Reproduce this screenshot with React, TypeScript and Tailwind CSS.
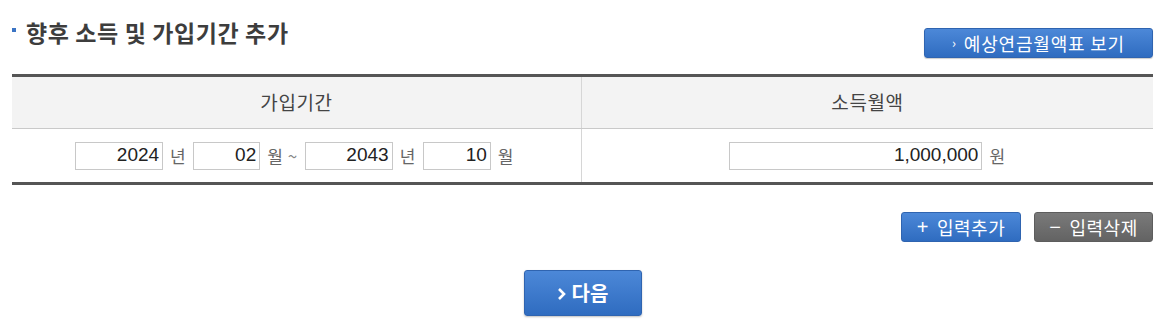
import React from 'react';

const KR = "font-['Noto_Sans_CJK_KR','Noto_Sans',sans-serif]";
const NUM = "font-['Liberation_Sans',Arial,sans-serif]";

const Field: React.FC<{ value: string; width: string }> = ({ value, width }) => (
  <input
    readOnly
    value={value}
    className={`${width} h-[28px] border border-[#c8c8c8] bg-white pr-[3px] text-right text-[19px] text-[#222] outline-none ${NUM}`}
  />
);

const Unit: React.FC<{ children: React.ReactNode }> = ({ children }) => (
  <span className={`text-[17px] tracking-[0.5px] text-[#666] ${KR}`}>{children}</span>
);

export default function App() {
  return (
    <div className={`w-[1170px] h-[330px] bg-white pl-[12px] pt-[16px] ${KR}`}>
      <div className="w-[1141px]">
        {/* title row */}
        <div className="flex items-start justify-between">
          <h2 className="flex items-center gap-[10px] text-[23px] tracking-[0.6px] font-bold text-[#3d3d3d] leading-[32px]">
            <span className="mt-[-4px] h-[4px] w-[4px] bg-[#3b74c4]" />
            향후 소득 및 가입기간 추가
          </h2>
          <button className="mt-[12px] flex h-[30px] w-[229px] items-center justify-center gap-[7px] rounded-[3px] border border-[#2f64b0] bg-gradient-to-b from-[#4c88d8] to-[#2f6cc0] text-[18px] tracking-[0.8px] text-white shadow-[0_1px_1px_rgba(0,0,0,0.2)]">
            <span className="text-[13px]">›</span>예상연금월액표 보기
          </button>
        </div>

        {/* table */}
        <div className="mt-[16px] border-t-[3px] border-b-[3px] border-[#555]">
          <div className="grid grid-cols-[570px_1fr] bg-[#f3f3f3] border-b border-[#c9c9c9] h-[52px] text-[19px] tracking-[0.6px] text-[#444]">
            <div className="flex items-center justify-center border-r border-[#d6d6d6]">가입기간</div>
            <div className="flex items-center justify-center">소득월액</div>
          </div>
          <div className="grid grid-cols-[570px_1fr] h-[53px]">
            <div className="flex items-center justify-center gap-[7px] border-r border-[#d6d6d6] pr-[4px]">
              <Field value="2024" width="w-[88px]" />
              <Unit>년</Unit>
              <Field value="02" width="w-[67px]" />
              <Unit>
                월 <span className="text-[#888]">~</span>
              </Unit>
              <Field value="2043" width="w-[88px]" />
              <Unit>년</Unit>
              <Field value="10" width="w-[68px]" />
              <Unit>월</Unit>
            </div>
            <div className="flex items-center justify-center gap-[7px]">
              <Field value="1,000,000" width="w-[253px]" />
              <Unit>원</Unit>
            </div>
          </div>
        </div>

        {/* add / delete */}
        <div className="mt-[27px] flex justify-end gap-[13px]">
          <button className="flex h-[30px] w-[120px] items-center justify-center gap-[8px] rounded-[3px] border border-[#2f64b0] bg-gradient-to-b from-[#4c88d8] to-[#2f6cc0] text-[18px] tracking-[0.5px] text-white">
            <span className={`text-[20px] ${NUM}`}>+</span>입력추가
          </button>
          <button className="flex h-[30px] w-[119px] items-center justify-center gap-[8px] rounded-[3px] border border-[#5d5d5d] bg-gradient-to-b from-[#7a7a7a] to-[#636363] text-[18px] tracking-[0.5px] text-white">
            <span className={`text-[20px] ${NUM}`}>−</span>입력삭제
          </button>
        </div>

        {/* next */}
        <div className="mt-[28px] flex justify-center">
          <button className="flex h-[46px] w-[118px] items-center justify-center gap-[5px] rounded-[3px] border border-[#2f64b0] bg-gradient-to-b from-[#4c88d8] to-[#2f6cc0] text-[20px] font-bold text-white shadow-[0_1px_2px_rgba(0,0,0,0.25)]">
            <svg width="10" height="14" viewBox="0 0 10 14" className="mt-[1px]">
              <path d="M2 2l5 5-5 5" stroke="white" strokeWidth="2.6" fill="none" />
            </svg>
            다음
          </button>
        </div>
      </div>
    </div>
  );
}
